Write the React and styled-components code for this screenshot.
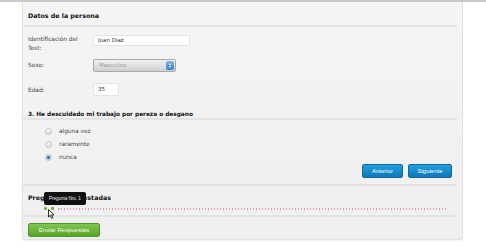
import React from "react";
import styled, { createGlobalStyle } from "styled-components";

const GlobalStyle = createGlobalStyle`
  html, body {
    margin: 0;
    padding: 0;
    background: #ffffff;
    font-family: "DejaVu Sans", Verdana, sans-serif;
    color: #333333;
  }
`;

const Page = styled.div`
  width: 486px;
  height: 250px;
  border-top: 2px solid #c9c9c9;
  box-sizing: border-box;
  overflow: hidden;
`;

const Panel = styled.div`
  position: relative;
  margin-left: 22px;
  width: 441px;
  height: 238px;
  box-sizing: border-box;
  background: linear-gradient(#f5f5f5, #efefef);
  border: 1px solid #e2e2e2;
  border-top: none;
  border-radius: 0 0 3px 3px;
  box-shadow: 0 1px 2px rgba(0, 0, 0, 0.06);
`;

const Section = styled.div`
  margin-right: 5px;
  padding: ${(p) => p.pad || "0 5px"};
  border-bottom: ${(p) => (p.line ? "2px solid #e3e3e3" : "none")};
  box-sizing: border-box;
  height: ${(p) => p.h}px;
`;

const Heading = styled.div`
  font-size: ${(p) => p.size || 6.3}px;
  font-weight: bold;
  color: #111;
  line-height: 10px;
  padding-top: ${(p) => p.top || 0}px;
`;

const FormGrid = styled.div`
  display: grid;
  grid-template-columns: 65px 1fr;
  padding-top: 8px;
`;

const Label = styled.div`
  font-size: 5.8px;
  line-height: 9px;
  color: #444;
  padding-top: ${(p) => p.top || 0}px;
  height: ${(p) => p.h}px;
`;

const TextInput = styled.div`
  width: ${(p) => p.w}px;
  height: ${(p) => p.h || 11}px;
  box-sizing: border-box;
  background: #fff;
  border: 1px solid #e4e4e4;
  border-radius: 1px;
  font-size: 5.5px;
  line-height: ${(p) => (p.h || 11) - 2}px;
  padding-left: 4px;
  color: #333;
`;

const Select = styled.div`
  position: relative;
  width: 83px;
  height: 13px;
  box-sizing: border-box;
  border: 1px solid #a9a9a9;
  border-radius: 2px;
  background: linear-gradient(#f2f2f2, #cfcfcf);
  font-size: 5.5px;
  line-height: 11px;
  padding-left: 5px;
  color: #999;
`;

const Spinner = styled.div`
  position: absolute;
  right: 1px;
  top: 1px;
  width: 8px;
  height: 9px;
  border-radius: 2px;
  background: linear-gradient(#7fb6ec, #2f7fd0);
  display: flex;
  flex-direction: column;
  align-items: center;
  justify-content: center;
  gap: 1px;
`;

const Arrow = styled.div`
  width: 0;
  height: 0;
  border-left: 1.5px solid transparent;
  border-right: 1.5px solid transparent;
  ${(p) => (p.up ? "border-bottom: 2px solid #fff;" : "border-top: 2px solid #fff;")}
`;

const Options = styled.div`
  padding: 7px 0 0 17px;
  display: flex;
  flex-direction: column;
  gap: 5px;
`;

const Option = styled.label`
  display: flex;
  align-items: center;
  gap: 7px;
  font-size: 5.8px;
  line-height: 8px;
  color: #444;
`;

const Radio = styled.span`
  width: 7px;
  height: 7px;
  border-radius: 50%;
  box-sizing: border-box;
  border: 1px solid #c4c4c4;
  background: ${(p) =>
    p.checked
      ? "radial-gradient(circle, #2a6fc0 0 1.3px, #bcd6f2 1.6px)"
      : "linear-gradient(#fafafa, #dcdcdc)"};
`;

const ButtonRow = styled.div`
  display: flex;
  justify-content: flex-end;
  gap: 5px;
  padding-top: 3px;
`;

const BlueButton = styled.div`
  width: ${(p) => p.w}px;
  height: 14px;
  box-sizing: border-box;
  border-radius: 2px;
  background: linear-gradient(#1fa0e0, #0f78b8);
  border: 1px solid #0d6aa3;
  color: #fff;
  font-family: "Liberation Sans", Arial, sans-serif;
  font-size: 6px;
  line-height: 12px;
  text-align: center;
`;

const Progress = styled.div`
  display: flex;
  align-items: center;
  gap: 4px;
  margin-top: 4px;
  padding-left: 16px;
`;

const Dot = styled.span`
  width: 3px;
  height: 3px;
  background: #74b43a;
  border-radius: 1px;
`;

const Dotted = styled.div`
  width: 388px;
  height: 2px;
  background: repeating-linear-gradient(90deg, #f0a0b4 0 1.5px, transparent 1.5px 3px);
`;

const BottomArea = styled.div`
  position: relative;
`;

const Tooltip = styled.div`
  position: absolute;
  left: 21px;
  top: 6px;
  width: 42px;
  height: 13px;
  background: #111;
  border-radius: 2px;
  color: #eee;
  font-family: "Liberation Sans", Arial, sans-serif;
  font-size: 4.5px;
  line-height: 13px;
  text-align: center;
`;

const Cursor = styled.svg`
  position: absolute;
  left: 25px;
  top: 23px;
`;

const GreenButton = styled.div`
  width: 72px;
  height: 14px;
  box-sizing: border-box;
  border-radius: 2px;
  background: linear-gradient(#82c54e, #56a52c);
  border: 1px solid #4d9a26;
  color: #f4fbe9;
  font-family: "Liberation Sans", Arial, sans-serif;
  font-size: 6px;
  line-height: 12px;
  text-align: center;
  margin: 6px 0 0 5px;
`;

export default function App() {
  return (
    <>
      <GlobalStyle />
      <Page>
        <Panel>
          <Section line h={25} pad="9px 5px 0">
            <Heading>Datos de la persona</Heading>
          </Section>
          <Section h={93} line>
            <FormGrid>
              <Label h={24}>
                Identificación del
                <br />
                Test:
              </Label>
              <TextInput w={97}>Juan Diaz</TextInput>
              <Label h={22} top={2}>Sexo:</Label>
              <Select>
                Masculino
                <Spinner>
                  <Arrow up />
                  <Arrow />
                </Spinner>
              </Select>
              <Label h={22} top={3}>Edad:</Label>
              <TextInput w={26} h={13}>35</TextInput>
            </FormGrid>
            <Heading top={1} size={5.8}>
              3. He descuidado mi trabajo por pereza o desgano
            </Heading>
          </Section>
          <Section h={66} line>
            <Options>
              <Option>
                <Radio />
                alguna vez
              </Option>
              <Option>
                <Radio />
                raramente
              </Option>
              <Option>
                <Radio checked />
                nunca
              </Option>
            </Options>
            <ButtonRow>
              <BlueButton w={41}>Anterior</BlueButton>
              <BlueButton w={44}>Siguiente</BlueButton>
            </ButtonRow>
          </Section>
          <BottomArea>
            <Section h={31} line pad="7px 5px 0">
              <Heading>Preguntas Contestadas</Heading>
              <Progress>
                <Dot />
                <Dot />
                <Dotted />
              </Progress>
            </Section>
            <Tooltip>Pregunta Nro. 1</Tooltip>
            <Cursor width="7" height="10" viewBox="0 0 7 10">
              <path
                d="M0.5 0.5 L0.5 8 L2.3 6.3 L3.6 9.3 L4.8 8.8 L3.6 5.9 L6 5.9 Z"
                fill="#fff"
                stroke="#000"
                strokeWidth="0.8"
              />
            </Cursor>
            <GreenButton>Enviar Respuestas</GreenButton>
          </BottomArea>
        </Panel>
      </Page>
    </>
  );
}
